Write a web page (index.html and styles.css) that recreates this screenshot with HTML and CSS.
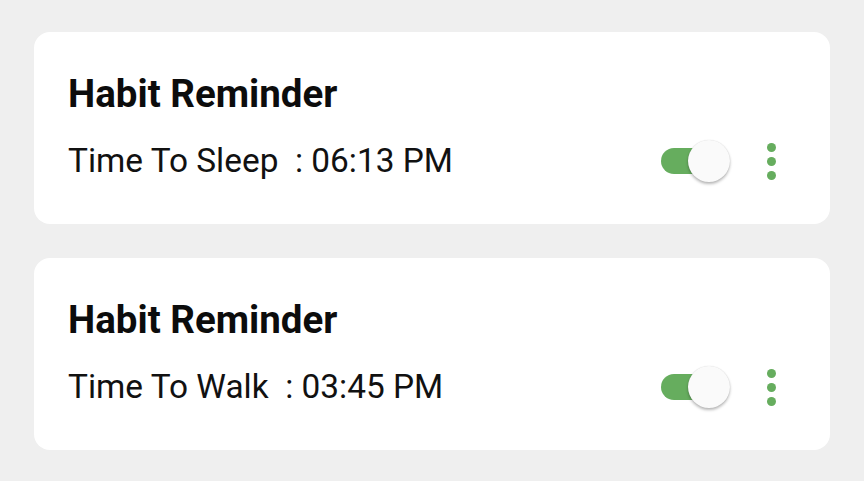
FILE: index.html
```html
<!DOCTYPE html>
<html>
<head>
<meta charset="utf-8">
<link rel="stylesheet" href="styles.css">
</head>
<body>
<main class="list">
  <section class="card">
    <h2 class="title">Habit Reminder</h2>
    <div class="row">
      <span class="label">Time To Sleep  : 06:13 PM</span>
      <div class="actions">
        <span class="switch"><span class="track"></span><span class="thumb"></span></span>
        <span class="more"><i></i><i></i><i></i></span>
      </div>
    </div>
  </section>
  <section class="card">
    <h2 class="title">Habit Reminder</h2>
    <div class="row">
      <span class="label">Time To Walk  : 03:45 PM</span>
      <div class="actions">
        <span class="switch"><span class="track"></span><span class="thumb"></span></span>
        <span class="more"><i></i><i></i><i></i></span>
      </div>
    </div>
  </section>
</main>
</body>
</html>
```
FILE: styles.css
```css
html, body {
  margin: 0;
  background: #efefef;
  font-family: Roboto, "Liberation Sans", sans-serif;
  color: #111;
}
.list {
  display: flex;
  flex-direction: column;
  gap: 34px;
  padding: 32px 34px;
}
.card {
  background: #fff;
  border-radius: 16px;
  height: 192px;
  box-sizing: border-box;
  padding: 42px 54px 0 34px;
  display: flex;
  flex-direction: column;
}
.title {
  margin: 0;
  font-size: 38.5px;
  font-weight: 700;
  line-height: 40px;
  color: #0c0c0c;
}
.row {
  display: flex;
  align-items: center;
  justify-content: space-between;
  margin-top: 25px;
  height: 44px;
}
.label {
  font-size: 33.4px;
  line-height: 40px;
  white-space: pre;
  color: #111;
}
.actions {
  display: flex;
  align-items: center;
  gap: 36px;
}
.switch {
  position: relative;
  width: 70px;
  height: 44px;
  display: block;
}
.track {
  position: absolute;
  left: 0;
  top: 9px;
  width: 58px;
  height: 26px;
  border-radius: 13px;
  background: #66ad5e;
}
.thumb {
  position: absolute;
  left: 27px;
  top: 1px;
  width: 42px;
  height: 42px;
  border-radius: 50%;
  background: #fafafa;
  box-shadow: 0 2px 3px rgba(0,0,0,0.28), 0 0 1px rgba(0,0,0,0.15);
}
.more {
  display: flex;
  flex-direction: column;
  gap: 5px;
  width: 9px;
}
.more i {
  display: block;
  width: 9px;
  height: 9px;
  border-radius: 50%;
  background: #66ad5e;
}
```
